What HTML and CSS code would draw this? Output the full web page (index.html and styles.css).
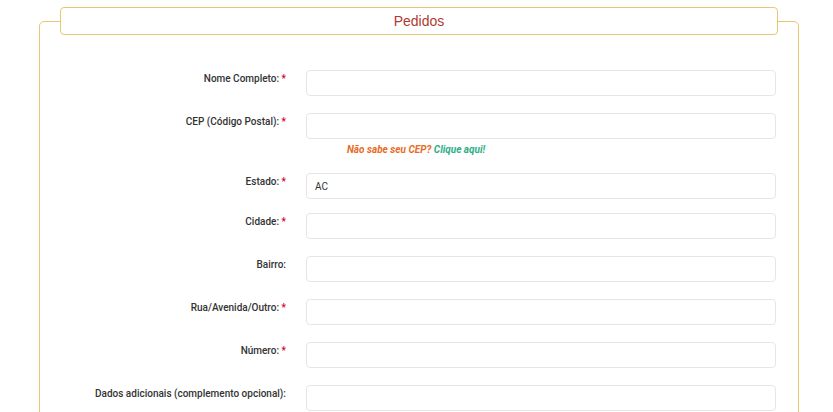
FILE: index.html
```html
<!DOCTYPE html>
<html lang="pt-BR">
<head>
<meta charset="utf-8">
<title>Pedidos</title>
<link rel="stylesheet" href="styles.css">
</head>
<body>
<fieldset class="box">
  <legend class="box-title">Pedidos</legend>
  <form class="form">
    <label class="lbl">Nome Completo: <span class="req">*</span></label>
    <div class="field"><input class="inp" type="text"></div>

    <label class="lbl">CEP (Código Postal): <span class="req">*</span></label>
    <div class="field">
      <input class="inp" type="text">
      <div class="hint"><span class="hint-q">Não sabe seu CEP?</span> <a class="hint-link">Clique aqui!</a></div>
    </div>

    <label class="lbl lbl-tight">Estado: <span class="req">*</span></label>
    <div class="field field-tight"><select class="inp sel"><option>AC</option></select></div>

    <label class="lbl">Cidade: <span class="req">*</span></label>
    <div class="field"><input class="inp" type="text"></div>

    <label class="lbl">Bairro:</label>
    <div class="field"><input class="inp" type="text"></div>

    <label class="lbl">Rua/Avenida/Outro: <span class="req">*</span></label>
    <div class="field"><input class="inp" type="text"></div>

    <label class="lbl">Número: <span class="req">*</span></label>
    <div class="field"><input class="inp" type="text"></div>

    <label class="lbl">Dados adicionais (complemento opcional):</label>
    <div class="field"><input class="inp" type="text"></div>
  </form>
</fieldset>
</body>
</html>
```

FILE: styles.css
```css
html, body {
  margin: 0;
  padding: 0;
  background: #fff;
  font-family: Roboto, "Liberation Sans", Arial, sans-serif;
  overflow: hidden;
}

.box {
  margin: 7px 34px 0 39px;
  padding: 0 20px 40px;
  border: 1px solid #e8c772;
  border-radius: 5px;
  min-height: 420px;
}

.box-title {
  box-sizing: border-box;
  width: 100%;
  height: 28px;
  padding: 0;
  border: 1px solid #e8c772;
  border-radius: 4px;
  background: #fff;
  color: #b1392f;
  font-family: "Liberation Sans", Arial, sans-serif;
  font-size: 14px;
  line-height: 27px;
  text-align: center;
}

.form {
  display: grid;
  grid-template-columns: 226px 470px;
  column-gap: 20px;
  margin-top: 35px;
}

.lbl {
  text-align: right;
  font-size: 10px;
  font-weight: 500;
  color: #333;
  line-height: 12px;
  padding-top: 3px;
  margin-bottom: 17px;
}

.req {
  color: #d0021b;
}

.field {
  margin-bottom: 17px;
}

.field-tight,
.lbl-tight {
  margin-bottom: 14px;
}

.inp {
  display: block;
  box-sizing: border-box;
  width: 100%;
  height: 26px;
  margin: 0;
  border: 1px solid #e6e6e6;
  border-radius: 4px;
  background: #fff;
  font-family: Roboto, "Liberation Sans", Arial, sans-serif;
  font-size: 10px;
  color: #333;
  padding: 0 8px;
  outline: none;
}

.sel {
  appearance: none;
  -webkit-appearance: none;
}

.hint {
  margin-top: 5px;
  padding-left: 41px;
  font-size: 10px;
  line-height: 12px;
  font-weight: 700;
  font-style: italic;
}

.hint-q {
  color: #ea6a26;
}

.hint-link {
  color: #2fae88;
}
```
